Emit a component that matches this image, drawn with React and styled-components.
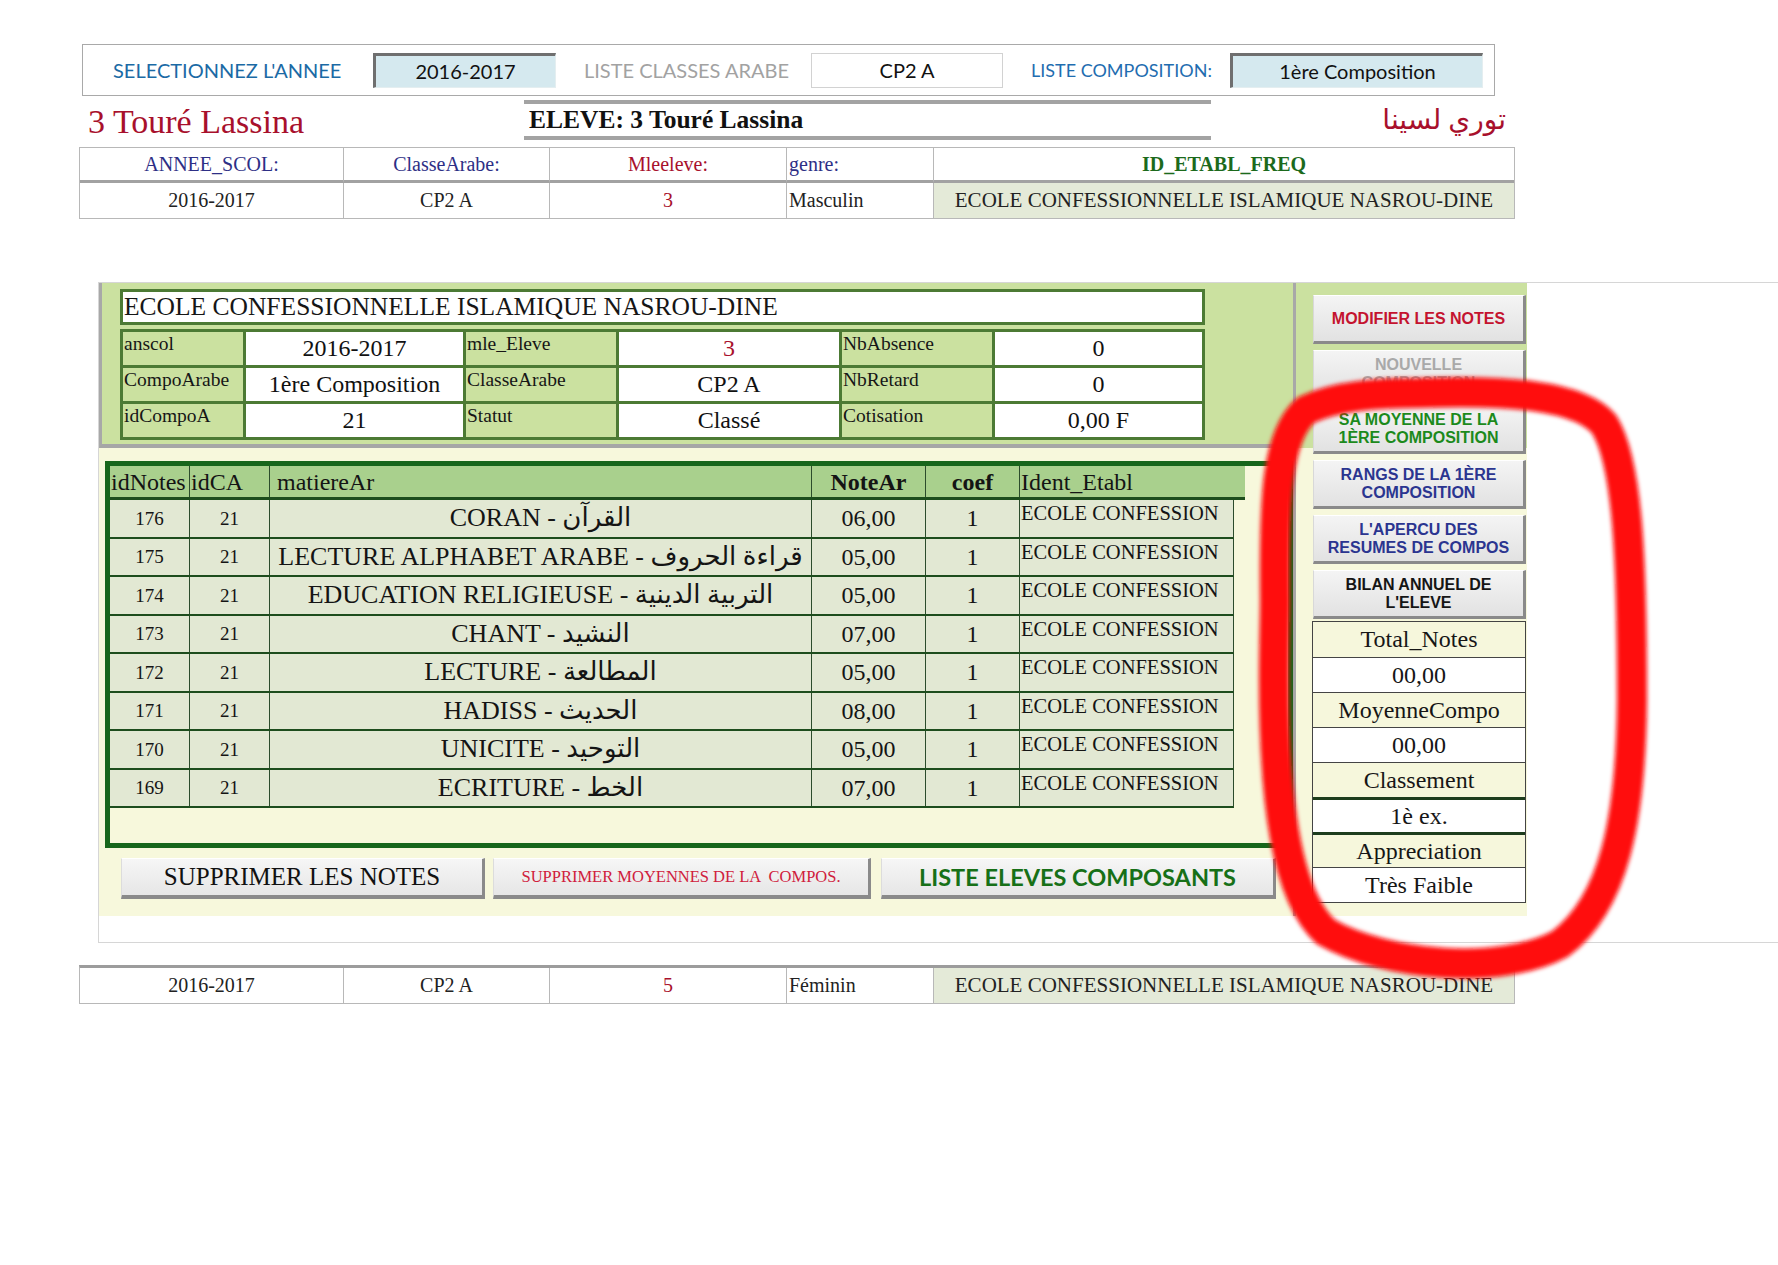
import React from "react";
import styled, { createGlobalStyle, css } from "styled-components";

const GlobalStyle = createGlobalStyle`
  html, body {
    margin: 0;
    padding: 0;
    background: #fff;
  }
  body {
    font-family: "Liberation Serif", "DejaVu Sans", serif;
    color: #161616;
  }
  * {
    box-sizing: border-box;
  }
`;

const GREEN = "#cbe1a0";
const BEIGE = "#f7f8dc";
const DARK = "#4c7a34";

const Page = styled.div`
  position: relative;
  width: 1778px;
  height: 1265px;
  overflow: hidden;
  padding-top: 44px;
`;

/* ---------- top selection bar ---------- */

const TopBar = styled.div`
  margin-left: 82px;
  width: 1413px;
  height: 52px;
  border: 1px solid #a9a9a9;
  display: flex;
  align-items: center;
`;

const BarLabel = styled.div`
  width: ${(p) => p.$w}px;
  margin-left: ${(p) => p.$ml || 0}px;
  font-family: Lato, "Open Sans", sans-serif;
  font-size: ${(p) => p.$size || 20}px;
  color: ${(p) => p.$color};
  white-space: nowrap;
`;

const SelectBox = styled.div`
  width: ${(p) => p.$w}px;
  height: 35px;
  display: flex;
  align-items: center;
  justify-content: center;
  font-family: Lato, "Open Sans", sans-serif;
  font-size: 20px;
  color: #111;
  background: #fff;
  border: 1px solid #d2d2d2;
  ${(p) =>
    p.$sunken &&
    css`
      background: #d5e9ef;
      border-top: 3px solid #6f6f6f;
      border-left: 3px solid #6f6f6f;
      border-right: 1px solid #e4eef0;
      border-bottom: 1px solid #e4eef0;
    `}
`;

/* ---------- name row ---------- */

const NameRow = styled.div`
  margin: 4px 0 0 88px;
  width: 1418px;
  height: 40px;
  display: grid;
  grid-template-columns: 436px 687px 1fr;
  align-items: center;
`;

const StudentName = styled.div`
  color: #a8102c;
  font-size: 34px;
  line-height: 1;
  margin-top: 4px;
  white-space: nowrap;
`;

const EleveBar = styled.div`
  height: 40px;
  border-top: 4px solid #a3a3a3;
  border-bottom: 4px solid #a3a3a3;
  display: flex;
  align-items: center;
  padding-left: 5px;
  font-weight: bold;
  font-size: 25.5px;
  color: #111;
  white-space: nowrap;
`;

const ArabicName = styled.div`
  justify-self: end;
  direction: rtl;
  color: #a8102c;
  font-size: 28px;
  line-height: 1;
`;

/* ---------- student record rows ---------- */

const RecordTable = styled.div`
  margin: ${(p) => p.$mt}px 0 0 79px;
  width: 1436px;
  display: grid;
  grid-template-columns: 263px 206px 237px 147px 1fr;
  border: 1px solid #b8b8b8;
  ${(p) =>
    p.$thickTop &&
    css`
      border-top: 3px solid #9c9c9c;
    `}
`;

const RecordCell = styled.div`
  height: 35px;
  display: flex;
  align-items: center;
  justify-content: ${(p) => (p.$left ? "flex-start" : "center")};
  padding-left: ${(p) => (p.$left ? 2 : 0)}px;
  font-size: ${(p) => p.$size || 20}px;
  color: ${(p) => p.$color || "#222"};
  font-weight: ${(p) => (p.$bold ? "bold" : "normal")};
  background: ${(p) => p.$bg || "#fff"};
  border-left: ${(p) => (p.$first ? "none" : "1px solid #b8b8b8")};
  border-bottom: ${(p) => (p.$sep ? "3px solid #a2a2a2" : "none")};
  white-space: nowrap;
`;

/* ---------- form section ---------- */

const FormSection = styled.div`
  margin: 63px 0 0 98px;
  border-top: 1px solid #d6d6d6;
  border-bottom: 1px solid #d6d6d6;
  border-left: 1px solid #d6d6d6;
  padding-bottom: 26px;
  display: flex;
`;

const LeftPanel = styled.div`
  width: 1194px;
  display: flex;
  flex-direction: column;
`;

const GreenTop = styled.div`
  height: 165px;
  background: ${GREEN};
  border-left: 3px solid #a8a8a8;
  border-bottom: 4px solid #a6a6a6;
  padding: 6px 0 0 18px;
`;

const SchoolTitle = styled.div`
  width: 1085px;
  height: 36px;
  background: #fff;
  border: 3px solid ${DARK};
  font-size: 25.5px;
  line-height: 30px;
  padding-left: 1px;
  white-space: nowrap;
`;

const FieldGrid = styled.div`
  margin-top: 4px;
  width: 1085px;
  display: grid;
  grid-template-columns: 120px 217px 150px 220px 150px 207px;
  grid-auto-rows: 33px;
  gap: 3px;
  padding: 3px;
  background: ${DARK};
`;

const FieldLabel = styled.div`
  background: ${GREEN};
  font-size: 19.5px;
  line-height: 1;
  padding: 2px 0 0 1px;
  white-space: nowrap;
`;

const FieldValue = styled.div`
  background: #fff;
  display: flex;
  align-items: center;
  justify-content: center;
  font-size: 24px;
  color: ${(p) => p.$color || "#111"};
  white-space: nowrap;
`;

const Lower = styled.div`
  height: 468px;
  background: ${BEIGE};
  padding: 13px 0 0 6px;
`;

const NotesBox = styled.div`
  width: 1188px;
  height: 387px;
  border: 5px solid #17661b;
`;

const NoteRow = styled.div`
  display: grid;
  width: ${(p) => (p.$head ? 1135 : 1124)}px;
  grid-template-columns: ${(p) =>
    p.$head ? "79px 80px 542px 114px 94px 226px" : "79px 80px 542px 114px 94px 215px"};
  height: ${(p) => (p.$head ? 34 : 38.5)}px;
  background: ${(p) => (p.$head ? "#a9d08d" : "#e2e8d3")};
  border-bottom: 2px solid #1d4d1d;
  border-right: ${(p) => (p.$head ? "none" : "1px solid #2c4c2c")};
  ${(p) =>
    p.$head &&
    css`
      border-bottom: 3px solid #1d4d1d;
    `}
`;

const NoteCell = styled.div`
  display: flex;
  align-items: ${(p) => (p.$top ? "flex-start" : "center")};
  justify-content: ${(p) => (p.$left ? "flex-start" : "center")};
  padding-top: ${(p) => (p.$top ? 3 : 0)}px;
  padding-left: ${(p) => (p.$left ? 1 : 0)}px;
  border-left: ${(p) => (p.$first ? "none" : "1px solid #2c4c2c")};
  font-size: ${(p) => p.$size || 24}px;
  font-weight: ${(p) => (p.$bold ? "bold" : "normal")};
  color: #141414;
  line-height: 1;
  white-space: nowrap;
  overflow: hidden;
`;

const ButtonRow = styled.div`
  margin: 10px 0 0 16px;
  display: flex;
  gap: 8px;
`;

const ActionButton = styled.div`
  width: ${(p) => p.$w}px;
  height: 41px;
  display: flex;
  align-items: center;
  justify-content: center;
  margin-left: ${(p) => p.$ml || 0}px;
  background: linear-gradient(#f6f6f6, #e6e6e6);
  border-top: 1px solid #fff;
  border-left: 1px solid #dcdcdc;
  border-right: 3px solid #8a8a8a;
  border-bottom: 4px solid #8a8a8a;
  font-family: ${(p) => p.$font};
  font-size: ${(p) => p.$size}px;
  font-weight: ${(p) => (p.$bold ? "bold" : "normal")};
  color: ${(p) => p.$color};
  white-space: pre;
`;

/* ---------- right column ---------- */

const RightCol = styled.div`
  width: 234px;
  height: 633px;
  border-left: 3px solid #a8a8a8;
  background: linear-gradient(${GREEN} 0 165px, ${BEIGE} 165px);
  padding: 12px 1px 0 17px;
  display: flex;
  flex-direction: column;
  gap: 6px;
`;

const SideButton = styled.div`
  height: 49px;
  display: flex;
  align-items: center;
  justify-content: center;
  text-align: center;
  white-space: pre-line;
  background: linear-gradient(#f4f4f4, #e2e2e2);
  border-top: 1px solid #fff;
  border-left: 1px solid #d8d8d8;
  border-right: 3px solid #8a8a8a;
  border-bottom: 3px solid #8a8a8a;
  font-family: "Liberation Sans", Arial, sans-serif;
  font-weight: bold;
  font-size: 16px;
  line-height: 1.12;
  color: ${(p) => p.$color};
`;

const StatsTable = styled.div`
  margin-top: -4px;
  width: 214px;
  margin-left: -1px;
  border: 1px solid #444;
  display: flex;
  flex-direction: column;
`;

const StatCell = styled.div`
  height: 35px;
  display: flex;
  align-items: center;
  justify-content: center;
  font-size: 24px;
  background: ${(p) => (p.$label ? "#f6f7dc" : "#fff")};
  border-top: ${(p) => (p.$thick ? "3px solid #1d3d1d" : "1px solid #444")};
  &:first-child {
    border-top: none;
  }
`;

/* ---------- annotation ---------- */

const Annotation = styled.svg`
  position: absolute;
  left: 0;
  top: 0;
  pointer-events: none;
`;

const fields = [
  ["anscol", "2016-2017", "mle_Eleve", "3", "NbAbsence", "0"],
  ["CompoArabe", "1ère Composition", "ClasseArabe", "CP2 A", "NbRetard", "0"],
  ["idCompoA", "21", "Statut", "Classé", "Cotisation", "0,00 F"],
];

const notes = [
  ["176", "CORAN - القرآن", "06,00"],
  ["175", "LECTURE ALPHABET ARABE - قراءة الحروف", "05,00"],
  ["174", "EDUCATION RELIGIEUSE - التربية الدينية", "05,00"],
  ["173", "CHANT - النشيد", "07,00"],
  ["172", "LECTURE - المطالعة", "05,00"],
  ["171", "HADISS - الحديث", "08,00"],
  ["170", "UNICITE - التوحيد", "05,00"],
  ["169", "ECRITURE - الخط", "07,00"],
];

const sideButtons = [
  ["MODIFIER LES NOTES", "#c4132f"],
  ["NOUVELLE\nCOMPOSITION", "#a9a9a9"],
  ["SA MOYENNE DE LA\n1ÈRE COMPOSITION", "#1c8a1c"],
  ["RANGS DE LA 1ÈRE\nCOMPOSITION", "#2b3590"],
  ["L'APERCU DES\nRESUMES DE COMPOS", "#2b3590"],
  ["BILAN ANNUEL DE\nL'ELEVE", "#151515"],
];

const stats = [
  ["Total_Notes", true],
  ["00,00", false],
  ["MoyenneCompo", true],
  ["00,00", false],
  ["Classement", true],
  ["1è ex.", false, true],
  ["Appreciation", true, true],
  ["Très Faible", false],
];

const SCHOOL = "ECOLE CONFESSIONNELLE ISLAMIQUE NASROU-DINE";

export default function App() {
  return (
    <Page>
      <GlobalStyle />

      <TopBar>
        <BarLabel $ml={30} $w={260} $color="#1b6aa5">
          SELECTIONNEZ L'ANNEE
        </BarLabel>
        <SelectBox $w={183} $sunken>
          2016-2017
        </SelectBox>
        <BarLabel $ml={28} $w={227} $color="#a2a2a2">
          LISTE CLASSES ARABE
        </BarLabel>
        <SelectBox $w={192}>CP2 A</SelectBox>
        <BarLabel $ml={28} $w={199} $size={18} $color="#1f6db0">
          LISTE COMPOSITION:
        </BarLabel>
        <SelectBox $w={253} $sunken>
          1ère Composition
        </SelectBox>
      </TopBar>

      <NameRow>
        <StudentName>3 Touré Lassina</StudentName>
        <EleveBar>ELEVE: 3 Touré Lassina</EleveBar>
        <ArabicName>توري لسينا</ArabicName>
      </NameRow>

      <RecordTable $mt={7}>
        <RecordCell $first $sep $color="#2e2f86">ANNEE_SCOL:</RecordCell>
        <RecordCell $sep $color="#2e2f86">ClasseArabe:</RecordCell>
        <RecordCell $sep $color="#a8102c">Mleeleve:</RecordCell>
        <RecordCell $sep $left $color="#2e2f86">genre:</RecordCell>
        <RecordCell $sep $bold $color="#1c6a1c">ID_ETABL_FREQ</RecordCell>
        <RecordCell $first>2016-2017</RecordCell>
        <RecordCell>CP2 A</RecordCell>
        <RecordCell $color="#a8102c">3</RecordCell>
        <RecordCell $left>Masculin</RecordCell>
        <RecordCell $bg="#e4ead8" $size={21}>{SCHOOL}</RecordCell>
      </RecordTable>

      <FormSection>
        <LeftPanel>
          <GreenTop>
            <SchoolTitle>{SCHOOL}</SchoolTitle>
            <FieldGrid>
              {fields.map((row) =>
                row.map((v, i) =>
                  i % 2 === 0 ? (
                    <FieldLabel key={row[0] + i}>{v}</FieldLabel>
                  ) : (
                    <FieldValue key={row[0] + i} $color={v === "3" ? "#a8102c" : undefined}>
                      {v}
                    </FieldValue>
                  )
                )
              )}
            </FieldGrid>
          </GreenTop>

          <Lower>
            <NotesBox>
              <NoteRow $head>
                <NoteCell $first $left>
                  idNotes
                </NoteCell>
                <NoteCell $left>idCA</NoteCell>
                <NoteCell $left>&nbsp;matiereAr</NoteCell>
                <NoteCell $bold>NoteAr</NoteCell>
                <NoteCell $bold>coef</NoteCell>
                <NoteCell $left>Ident_Etabl</NoteCell>
              </NoteRow>
              {notes.map(([id, matiere, note]) => (
                <NoteRow key={id}>
                  <NoteCell $first $size={19}>
                    {id}
                  </NoteCell>
                  <NoteCell $size={19}>21</NoteCell>
                  <NoteCell $size={26}>{matiere}</NoteCell>
                  <NoteCell>{note}</NoteCell>
                  <NoteCell>1</NoteCell>
                  <NoteCell $top $left $size={20.5}>
                    ECOLE CONFESSION
                  </NoteCell>
                </NoteRow>
              ))}
            </NotesBox>

            <ButtonRow>
              <ActionButton $w={364} $size={25} $font={'"Liberation Serif", serif'} $color="#111">
                SUPPRIMER LES NOTES
              </ActionButton>
              <ActionButton $w={378} $size={16.5} $font={'"Liberation Serif", serif'} $color="#d0203c">
                {"SUPPRIMER MOYENNES DE LA  COMPOS."}
              </ActionButton>
              <ActionButton $w={395} $ml={2} $size={23.5} $bold $font={'Lato, "Open Sans", sans-serif'} $color="#177017">
                LISTE ELEVES COMPOSANTS
              </ActionButton>
            </ButtonRow>
          </Lower>
        </LeftPanel>

        <RightCol>
          {sideButtons.map(([label, color]) => (
            <SideButton key={label} $color={color}>
              {label}
            </SideButton>
          ))}
          <StatsTable>
            {stats.map(([v, label, thick], i) => (
              <StatCell key={i} $label={label} $thick={thick}>
                {v}
              </StatCell>
            ))}
          </StatsTable>
        </RightCol>
      </FormSection>

      <RecordTable $mt={22} $thickTop>
        <RecordCell $first>2016-2017</RecordCell>
        <RecordCell>CP2 A</RecordCell>
        <RecordCell $color="#a8102c">5</RecordCell>
        <RecordCell $left>Féminin</RecordCell>
        <RecordCell $bg="#e4ead8" $size={21}>{SCHOOL}</RecordCell>
      </RecordTable>

      <Annotation width="1778" height="1265" viewBox="0 0 1778 1265">
        <defs>
          <filter id="soft" x="-10%" y="-10%" width="120%" height="120%">
            <feGaussianBlur stdDeviation="2.2" />
          </filter>
        </defs>
        <path
          d="M1275 600 C1274 500 1276 436 1306 410 C1338 395 1380 393 1420 393 C1500 390 1578 394 1604 424 C1628 462 1632 560 1632 700 C1631 820 1614 904 1560 944 C1500 976 1386 966 1326 932 C1286 896 1274 800 1274 680 C1274 640 1275 620 1275 600 Z"
          fill="none"
          stroke="#ff0a0a"
          strokeWidth="30"
          strokeLinejoin="round"
          filter="url(#soft)"
        />
      </Annotation>
    </Page>
  );
}
